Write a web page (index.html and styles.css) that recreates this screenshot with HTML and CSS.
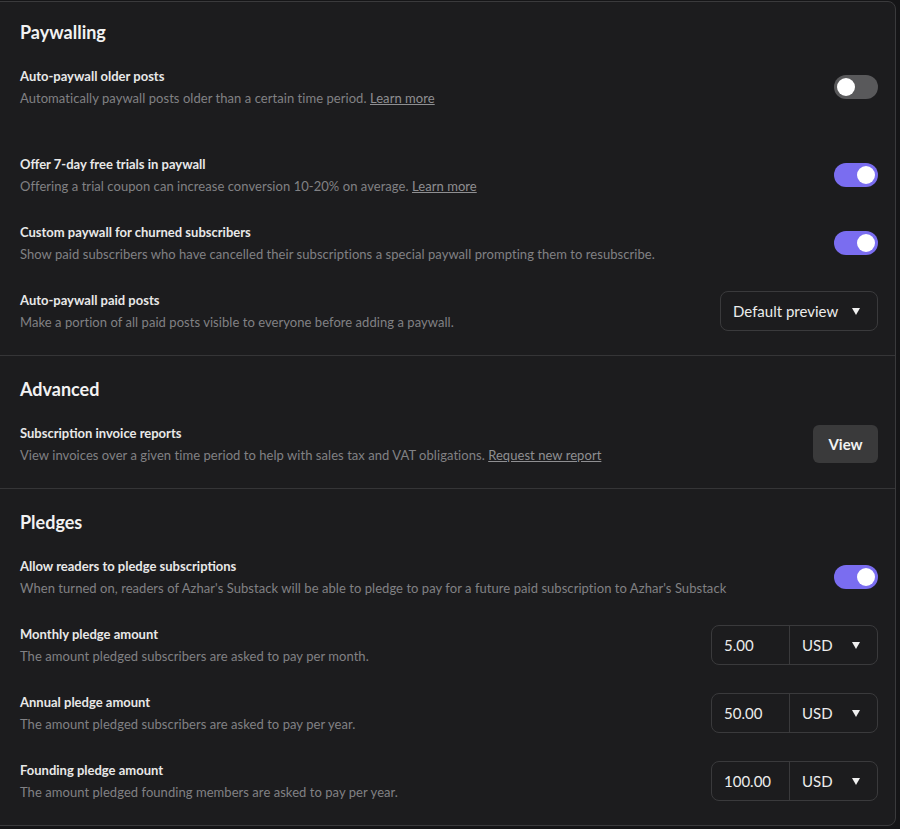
FILE: index.html
```html
<!DOCTYPE html>
<html lang="en">
<head>
<meta charset="utf-8">
<title>Settings</title>
<link rel="stylesheet" href="styles.css">
</head>
<body>
<div class="card">
  <section class="section">
    <h2 class="heading">Paywalling</h2>
    <div class="rows">
      <div class="row row-extra">
        <div class="text">
          <div class="label">Auto-paywall older posts</div>
          <div class="desc">Automatically paywall posts older than a certain time period. <a class="link" href="#">Learn more</a></div>
        </div>
        <span class="toggle"><span class="knob"></span></span>
      </div>
      <div class="row">
        <div class="text">
          <div class="label">Offer 7-day free trials in paywall</div>
          <div class="desc">Offering a trial coupon can increase conversion 10-20% on average. <a class="link" href="#">Learn more</a></div>
        </div>
        <span class="toggle on"><span class="knob"></span></span>
      </div>
      <div class="row">
        <div class="text">
          <div class="label">Custom paywall for churned subscribers</div>
          <div class="desc">Show paid subscribers who have cancelled their subscriptions a special paywall prompting them to resubscribe.</div>
        </div>
        <span class="toggle on"><span class="knob"></span></span>
      </div>
      <div class="row">
        <div class="text">
          <div class="label">Auto-paywall paid posts</div>
          <div class="desc">Make a portion of all paid posts visible to everyone before adding a paywall.</div>
        </div>
        <div class="select">Default preview<span class="caret"></span></div>
      </div>
    </div>
  </section>
  <section class="section">
    <h2 class="heading">Advanced</h2>
    <div class="rows">
      <div class="row">
        <div class="text">
          <div class="label">Subscription invoice reports</div>
          <div class="desc">View invoices over a given time period to help with sales tax and VAT obligations. <a class="link" href="#">Request new report</a></div>
        </div>
        <button class="btn">View</button>
      </div>
    </div>
  </section>
  <section class="section">
    <h2 class="heading">Pledges</h2>
    <div class="rows">
      <div class="row">
        <div class="text">
          <div class="label">Allow readers to pledge subscriptions</div>
          <div class="desc">When turned on, readers of Azhar's Substack will be able to pledge to pay for a future paid subscription to Azhar's Substack</div>
        </div>
        <span class="toggle on"><span class="knob"></span></span>
      </div>
      <div class="row">
        <div class="text">
          <div class="label">Monthly pledge amount</div>
          <div class="desc">The amount pledged subscribers are asked to pay per month.</div>
        </div>
        <div class="amount"><span class="value">5.00</span><span class="currency">USD<span class="caret"></span></span></div>
      </div>
      <div class="row">
        <div class="text">
          <div class="label">Annual pledge amount</div>
          <div class="desc">The amount pledged subscribers are asked to pay per year.</div>
        </div>
        <div class="amount"><span class="value">50.00</span><span class="currency">USD<span class="caret"></span></span></div>
      </div>
      <div class="row">
        <div class="text">
          <div class="label">Founding pledge amount</div>
          <div class="desc">The amount pledged founding members are asked to pay per year.</div>
        </div>
        <div class="amount"><span class="value">100.00</span><span class="currency">USD<span class="caret"></span></span></div>
      </div>
    </div>
  </section>
</div>
</body>
</html>
```

FILE: styles.css
```css
html, body {
  margin: 0;
  padding: 0;
  background: #151517;
}
body {
  font-family: "Lato", "Noto Sans", sans-serif;
  color: #e6e6e6;
  padding-top: 1px;
}
.card {
  margin: 0 4px 0 -10px;
  border: 1px solid #3a3a3c;
  border-radius: 8px;
  background: #1c1c1e;
}
.section {
  padding: 21px 17px 24px 29px;
  border-top: 1px solid #353537;
}
.section:first-child {
  border-top: none;
  padding-top: 18px;
}
.heading {
  margin: 0;
  font-size: 18px;
  line-height: 24px;
  font-weight: 700;
  color: #f2f2f2;
}
.rows {
  margin-top: 23px;
  display: flex;
  flex-direction: column;
  gap: 28px;
}
.row {
  display: flex;
  align-items: center;
  justify-content: space-between;
  gap: 20px;
  min-height: 40px;
}
.row-extra {
  margin-bottom: 20px;
}
.text {
  display: flex;
  flex-direction: column;
  gap: 4px;
}
.label {
  font-size: 13px;
  line-height: 18px;
  font-weight: 700;
  color: #e8e8e8;
}
.desc {
  font-size: 13px;
  line-height: 18px;
  color: #818184;
  letter-spacing: 0.05px;
}
.link {
  color: #8f8f92;
  text-decoration: underline;
}
.toggle {
  flex: none;
  width: 44px;
  height: 24px;
  border-radius: 12px;
  background: #59595b;
  display: flex;
  align-items: center;
  padding: 0 3px;
  box-sizing: border-box;
}
.toggle.on {
  background: #7a6df0;
  justify-content: flex-end;
}
.knob {
  width: 18px;
  height: 18px;
  border-radius: 50%;
  background: #ffffff;
}
.select {
  flex: none;
  width: 158px;
  height: 40px;
  box-sizing: border-box;
  border: 1px solid #3a3a3c;
  border-radius: 8px;
  display: flex;
  align-items: center;
  justify-content: space-between;
  padding: 0 17px 0 12px;
  font-size: 15px;
  color: #ececec;
}
.caret {
  width: 0;
  height: 0;
  border-left: 4.5px solid transparent;
  border-right: 4.5px solid transparent;
  border-top: 7px solid #f0f0f0;
}
.btn {
  flex: none;
  width: 65px;
  height: 38px;
  border: none;
  border-radius: 6px;
  background: #3a3a3b;
  color: #f2f2f2;
  font-family: inherit;
  font-size: 15px;
  font-weight: 700;
  padding: 0;
}
.amount {
  flex: none;
  width: 167px;
  height: 40px;
  box-sizing: border-box;
  border: 1px solid #3a3a3c;
  border-radius: 8px;
  display: flex;
  font-size: 15px;
  color: #ececec;
}
.value {
  width: 78px;
  border-right: 1px solid #3a3a3c;
  display: flex;
  align-items: center;
  padding-left: 12px;
  box-sizing: border-box;
}
.currency {
  flex: 1;
  display: flex;
  align-items: center;
  justify-content: space-between;
  padding: 0 17px 0 12px;
}
```
